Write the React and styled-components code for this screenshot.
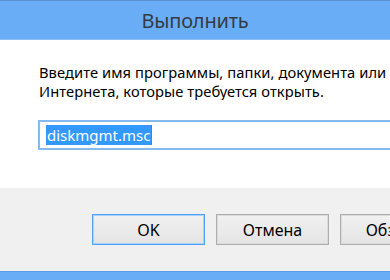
import React from "react";
import styled, { createGlobalStyle } from "styled-components";

const Global = createGlobalStyle`
  html, body { margin: 0; padding: 0; }
  body { width: 390px; height: 280px; overflow: hidden; background: #ffffff; }
  #root { width: 390px; height: 280px; }
`;

const Window = styled.div`
  width: 390px;
  height: 280px;
  display: flex;
  flex-direction: column;
  overflow: hidden;
  font-family: "Noto Sans", "Open Sans", sans-serif;
`;

const TitleBar = styled.div`
  height: 38px;
  flex: 0 0 auto;
  background: #6aadf7;
  border-top: 1px solid #5a8fd2;
  border-bottom: 1px solid #8cbdf0;
  display: flex;
  align-items: center;
  justify-content: center;
  color: #353b42;
  font-size: 20px;
  letter-spacing: -0.2px;
`;

const Body = styled.div`
  height: 148px;
  flex: 0 0 auto;
  background: #ffffff;
  padding: 23px 0 0 39px;
  box-sizing: border-box;
  display: flex;
  flex-direction: column;
  gap: 20px;
`;

const Prompt = styled.p`
  margin: 0;
  width: 348px;
  overflow: hidden;
  font-size: 14.7px;
  letter-spacing: 0.07px;
  line-height: 18.5px;
  color: #000000;
  white-space: nowrap;
`;

const Field = styled.div`
  margin-left: -1px;
  height: 30px;
  width: 360px;
  box-sizing: border-box;
  border: 2px solid #86b9ee;
  border-right: none;
  display: flex;
  align-items: center;
  padding-left: 6px;
`;

const Selected = styled.span`
  background: #3399ff;
  color: #ffffff;
  font-size: 15px;
  line-height: 20px;
  padding: 0 1px;
`;

const Caret = styled.span`
  width: 1px;
  height: 20px;
  background: #c8640a;
`;

const Footer = styled.div`
  flex: 1 1 auto;
  background: #f0f0f0;
  display: flex;
  align-items: flex-start;
  gap: 11px;
  padding: 26px 0 0 92px;
  overflow: hidden;
`;

const Button = styled.div`
  flex: 0 0 auto;
  width: 113px;
  height: 31px;
  box-sizing: border-box;
  border: 1px solid ${(p) => (p.$default ? "#4ea3f5" : "#adadad")};
  box-shadow: inset 0 0 0 1px ${(p) => (p.$default ? "#a8d2fb" : "#dcdcdc")};
  background: linear-gradient(#f1f1f1, #e4e4e4);
  display: flex;
  align-items: center;
  justify-content: center;
  font-size: 16px;
  color: #000000;
`;

const BottomBar = styled.div`
  height: 8px;
  flex: 0 0 auto;
  background: #6aadf7;
  border-top: 1px solid #5b9de6;
`;

export default function App() {
  return (
    <>
      <Global />
      <Window>
        <TitleBar>Выполнить</TitleBar>
        <Body>
          <Prompt>
            Введите имя программы, папки, документа или ресурса
            <br />
            Интернета, которые требуется открыть.
          </Prompt>
          <Field>
            <Selected>diskmgmt.msc</Selected>
            <Caret />
          </Field>
        </Body>
        <Footer>
          <Button $default>OK</Button>
          <Button>Отмена</Button>
          <Button>Обзор...</Button>
        </Footer>
        <BottomBar />
      </Window>
    </>
  );
}
